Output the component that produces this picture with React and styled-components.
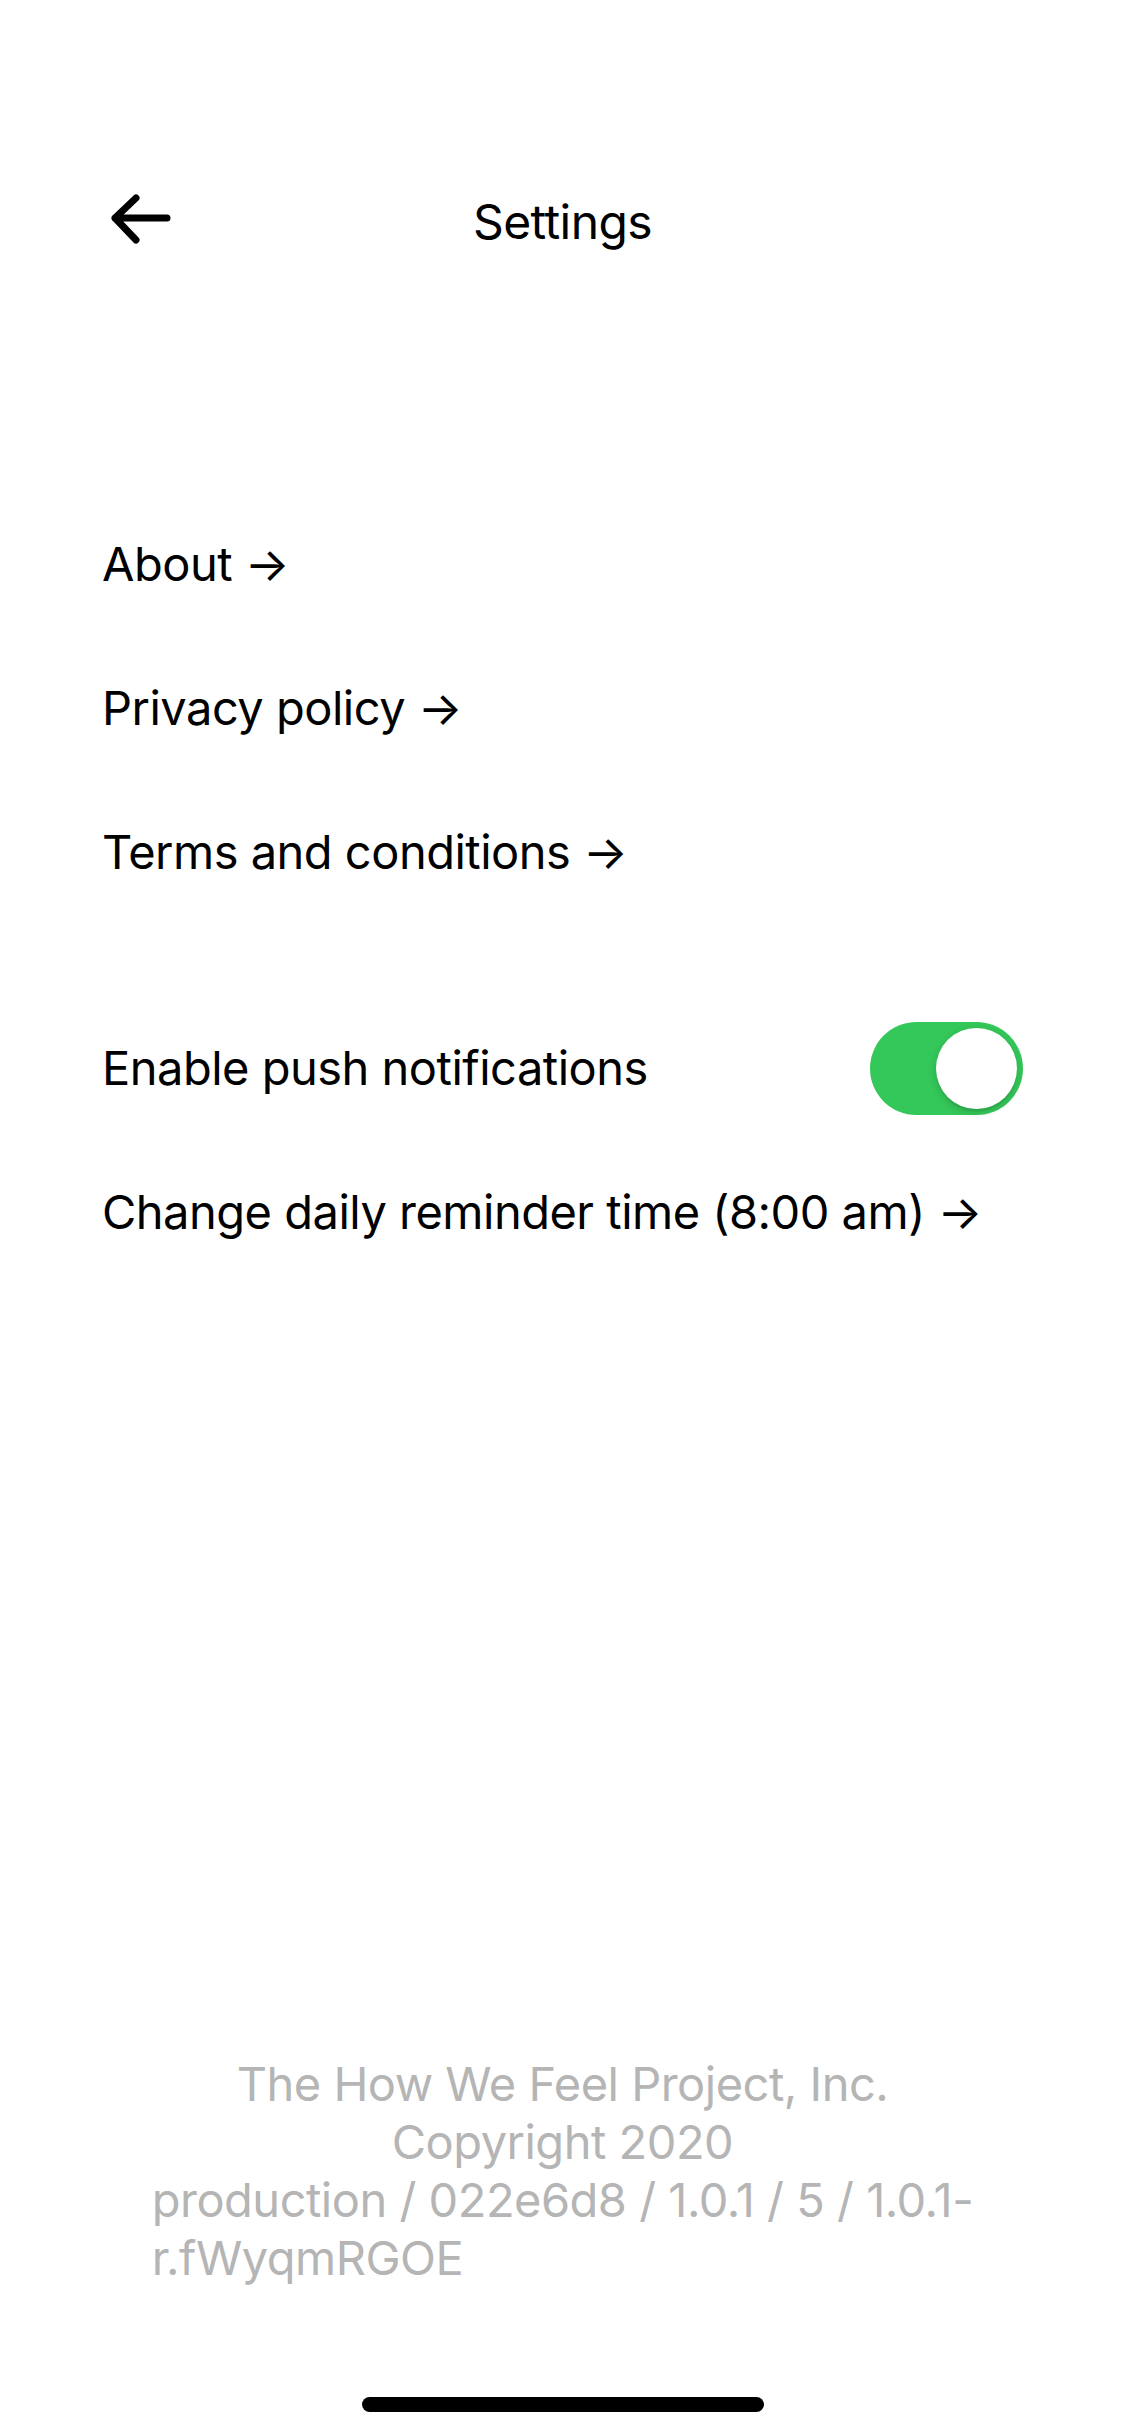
import React from 'react';
import styled, { createGlobalStyle } from 'styled-components';

const GlobalStyle = createGlobalStyle`
  html, body {
    margin: 0;
    padding: 0;
    background: #ffffff;
  }
  body {
    font-family: Inter, "Noto Sans", "Liberation Sans", sans-serif;
    color: #000000;
    -webkit-font-smoothing: antialiased;
  }
`;

const sidePadding = 102;
const rowHeight = 144;

const Screen = styled.div`
  display: flex;
  flex-direction: column;
  min-height: 100vh;
  box-sizing: border-box;
  padding: 0 ${sidePadding}px;
`;

const Header = styled.header`
  display: grid;
  grid-template-columns: 1fr auto 1fr;
  align-items: center;
  height: 100px;
  margin-top: 168px;
`;

const BackButton = styled.button`
  justify-self: start;
  display: flex;
  align-items: center;
  padding: 0;
  margin: 0;
  border: none;
  background: none;
  cursor: pointer;
`;

const Title = styled.h1`
  margin: 0;
  padding-top: 8px;
  font-size: 48px;
  font-weight: 400;
  line-height: 92px;
  letter-spacing: -0.6px;
`;

const List = styled.nav`
  display: flex;
  flex-direction: column;
  margin-top: ${(p) => p.$gap}px;
`;

const Row = styled.div`
  display: flex;
  align-items: center;
  justify-content: space-between;
  height: ${rowHeight}px;
  font-size: 47px;
  line-height: ${rowHeight}px;
  letter-spacing: -0.5px;
  white-space: nowrap;
  cursor: pointer;
`;

const Track = styled.div`
  position: relative;
  display: flex;
  align-items: center;
  justify-content: ${(p) => (p.$on ? 'flex-end' : 'flex-start')};
  box-sizing: border-box;
  width: 153px;
  height: 93px;
  padding: 6px;
  border-radius: 47px;
  background: ${(p) => (p.$on ? '#34c759' : '#e9e9eb')};
`;

const Knob = styled.span`
  width: 81px;
  height: 81px;
  border-radius: 50%;
  background: #ffffff;
  box-shadow: 0 3px 8px rgba(0, 0, 0, 0.15), 0 3px 1px rgba(0, 0, 0, 0.06);
`;

const Footer = styled.footer`
  margin-top: auto;
  display: flex;
  flex-direction: column;
  align-items: center;
  color: #b5b5b5;
  font-size: 47px;
  line-height: 58px;
  letter-spacing: -0.5px;
`;

const FooterLine = styled.div`
  text-align: center;
`;

const BuildInfo = styled.div`
  width: fit-content;
  text-align: left;
  white-space: nowrap;
`;

const HomeBar = styled.div`
  align-self: center;
  width: 402px;
  height: 15px;
  margin: 110px 0 24px;
  border-radius: 8px;
  background: #000000;
`;

const BackArrow = () => (
  <svg width="72" height="56" viewBox="0 0 72 56" fill="none">
    <path
      d="M34 8 L13 28 L34 50 M13 28 H65"
      stroke="#000"
      strokeWidth="7"
      strokeLinecap="round"
      strokeLinejoin="round"
    />
  </svg>
);

const Toggle = ({ on }) => (
  <Track $on={on}>
    <Knob />
  </Track>
);

const links = ['About', 'Privacy policy', 'Terms and conditions'];

export default function App() {
  return (
    <>
      <GlobalStyle />
      <Screen>
        <Header>
          <BackButton aria-label="Back">
            <BackArrow />
          </BackButton>
          <Title>Settings</Title>
          <span />
        </Header>

        <List $gap={224}>
          {links.map((label) => (
            <Row key={label}>{label} →</Row>
          ))}
        </List>

        <List $gap={72}>
          <Row>
            Enable push notifications
            <Toggle on />
          </Row>
          <Row>Change daily reminder time (8:00 am) →</Row>
        </List>

        <Footer>
          <FooterLine>The How We Feel Project, Inc.</FooterLine>
          <FooterLine>Copyright 2020</FooterLine>
          <BuildInfo>
            production / 022e6d8 / 1.0.1 / 5 / 1.0.1-
            <br />
            r.fWyqmRGOE
          </BuildInfo>
        </Footer>

        <HomeBar />
      </Screen>
    </>
  );
}
